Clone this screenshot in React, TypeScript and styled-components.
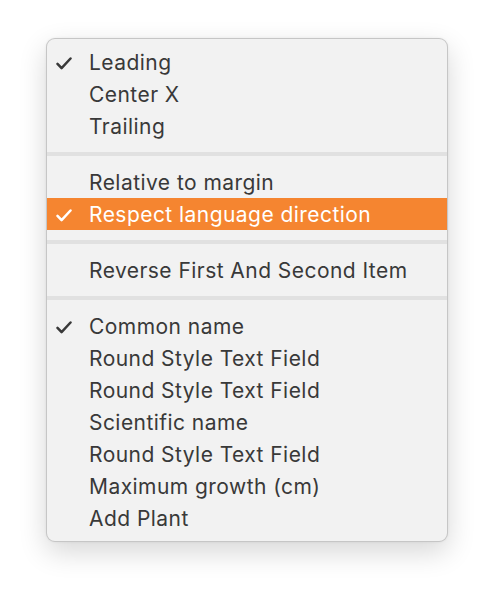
import styled, {createGlobalStyle} from 'styled-components';

type Entry = {label: string; checked?: boolean; active?: boolean};

const groups: Entry[][] = [
  [{label: 'Leading', checked: true}, {label: 'Center X'}, {label: 'Trailing'}],
  [
    {label: 'Relative to margin'},
    {label: 'Respect language direction', checked: true, active: true},
  ],
  [{label: 'Reverse First And Second Item'}],
  [
    {label: 'Common name', checked: true},
    {label: 'Round Style Text Field'},
    {label: 'Round Style Text Field'},
    {label: 'Scientific name'},
    {label: 'Round Style Text Field'},
    {label: 'Maximum growth (cm)'},
    {label: 'Add Plant'},
  ],
];

function Check() {
  return (
    <svg width="16" height="13" viewBox="0 0 16 13">
      <path
        d="M1.5 6.8 L5.6 11.2 L14.5 1.5"
        fill="none"
        stroke="currentColor"
        strokeWidth="2.5"
        strokeLinecap="round"
        strokeLinejoin="round"
      />
    </svg>
  );
}

function App() {
  return (
    <>
      <GlobalStyle />
      <Page>
        <Menu>
          {groups.map((group, gi) => (
            <Group key={gi}>
              {gi > 0 && <Separator />}
              {group.map((item, i) => (
                <Item key={i} $active={item.active}>
                  <Mark>{item.checked && <Check />}</Mark>
                  <Label>{item.label}</Label>
                </Item>
              ))}
            </Group>
          ))}
        </Menu>
      </Page>
    </>
  );
}

const GlobalStyle = createGlobalStyle`
  html, body {
    margin: 0;
    background: #ffffff;
  }
`;

const Page = styled.div`
  width: 494px;
  height: 596px;
  box-sizing: border-box;
  padding: 38px 0 0 46px;
`;

const Menu = styled.div`
  width: 402px;
  box-sizing: border-box;
  padding: 7px 0;
  background: #f2f2f2;
  border: 1px solid rgba(0, 0, 0, 0.18);
  border-radius: 9px;
  box-shadow: 0 10px 28px rgba(0, 0, 0, 0.16), 0 0 3px rgba(0, 0, 0, 0.06);
  font-family: Inter, 'Noto Sans', sans-serif;
`;

const Group = styled.div`
  display: flex;
  flex-direction: column;
`;

const Separator = styled.div`
  height: 4px;
  margin: 10px 0;
  background: #e1e1e1;
`;

const Item = styled.div<{$active?: boolean}>`
  display: flex;
  align-items: center;
  height: 32px;
  background: ${p => (p.$active ? '#f58530' : 'transparent')};
  color: ${p => (p.$active ? '#ffffff' : '#393939')};
`;

const Mark = styled.span`
  display: flex;
  align-items: center;
  width: 42px;
  height: 100%;
  box-sizing: border-box;
  padding: 3px 0 0 9px;
`;

const Label = styled.span`
  font-size: 21px;
  letter-spacing: 0.45px;
  white-space: nowrap;
`;

export default App;
